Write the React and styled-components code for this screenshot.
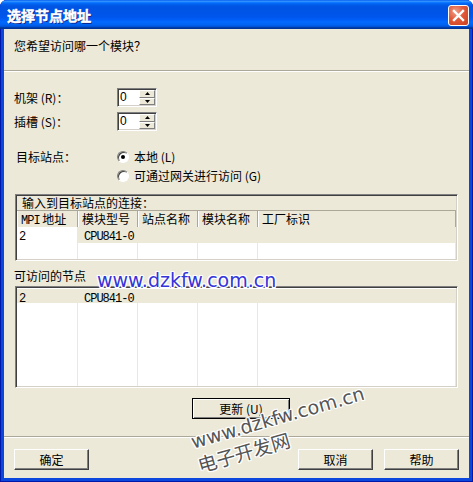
import React from "react";
import styled, { createGlobalStyle } from "styled-components";

const cols = ["", "", "", "", ""];

const App = () => {
  return (
    <>
      <GlobalStyle />
      <Window>
        <TitleBar>
          <Title>选择节点地址</Title>
          <CloseButton>
            <svg width="13" height="13" viewBox="0 0 13 13">
              <path d="M2 2 L11 11 M11 2 L2 11" stroke="#fff" strokeWidth="2.4" strokeLinecap="square" />
            </svg>
          </CloseButton>
        </TitleBar>

        <Body>
          <Question>您希望访问哪一个模块？</Question>
          <Separator />

          <FieldRow $mt={16} $h={19}>
            <Label>机架 (R)：</Label>
            <SpinBox value="0" />
          </FieldRow>
          <FieldRow $mt={5} $h={19}>
            <Label>插槽 (S)：</Label>
            <SpinBox value="0" />
          </FieldRow>

          <FieldRow $mt={18} $h={16}>
            <Label $indent={2}>目标站点：</Label>
            <RadioOption>
              <Radio $checked />
              本地 (L)
            </RadioOption>
          </FieldRow>
          <FieldRow $mt={3} $h={16}>
            <Label />
            <RadioOption>
              <Radio />
              可通过网关进行访问 (G)
            </RadioOption>
          </FieldRow>

          <ListFrame $mt={10} $h={67}>
            <Caption>输入到目标站点的连接：</Caption>
            <HeaderRow>
              <HeaderCell>
                <Mono>MPI</Mono>&nbsp;地址
              </HeaderCell>
              <HeaderCell>模块型号</HeaderCell>
              <HeaderCell>站点名称</HeaderCell>
              <HeaderCell>模块名称</HeaderCell>
              <HeaderCell>工厂标识</HeaderCell>
            </HeaderRow>
            <Row>
              <Cell $first>
                <Mono>2</Mono>
              </Cell>
              <Cell $grey>
                <Mono>CPU841-0</Mono>
              </Cell>
              <Cell $grey />
              <Cell $grey />
              <Cell $grey />
            </Row>
            <Row>
              {cols.map((c, i) => (
                <Cell key={i} $first={i === 0} />
              ))}
            </Row>
          </ListFrame>

          <SectionLabel>可访问的节点</SectionLabel>
          <ListFrame $mt={2} $h={102}>
            <NodeGrid>
              <Cell $first $grey>
                <Mono>2</Mono>
              </Cell>
              <Cell $grey>
                <Mono>CPU841-0</Mono>
              </Cell>
              <Cell $grey />
              <Cell $grey />
              <Cell $grey />
              {cols.map((c, i) => (
                <Cell key={i} $first={i === 0} $tall />
              ))}
            </NodeGrid>
          </ListFrame>

          <UpdateButton>更新 (U)</UpdateButton>
          <Separator $mt={17} />

          <ButtonBar>
            <Button>确定</Button>
            <RightButtons>
              <Button>取消</Button>
              <Button>帮助</Button>
            </RightButtons>
          </ButtonBar>
        </Body>

        <WatermarkBlue>www.dzkfw.com.cn</WatermarkBlue>
        <WatermarkGrey>
          <div>www.dzkfw.com.cn</div>
          <div>电子开发网</div>
        </WatermarkGrey>
      </Window>
    </>
  );
};

const SpinBox = ({ value }) => (
  <Spin>
    <SpinValue>{value}</SpinValue>
    <SpinButtons>
      <SpinArrow>
        <svg width="5" height="3" viewBox="0 0 5 3">
          <path d="M2.5 0 L5 3 L0 3 Z" fill="#000" />
        </svg>
      </SpinArrow>
      <SpinArrow>
        <svg width="5" height="3" viewBox="0 0 5 3">
          <path d="M0 0 L5 0 L2.5 3 Z" fill="#000" />
        </svg>
      </SpinArrow>
    </SpinButtons>
  </Spin>
);

export default App;

const GlobalStyle = createGlobalStyle`
  html, body {
    margin: 0;
    padding: 0;
    background: #ffffff;
  }
  body {
    font-family: "Noto Sans CJK SC", "Liberation Sans", sans-serif;
    font-size: 12px;
    color: #000;
  }
`;

const Window = styled.div`
  position: relative;
  width: 473px;
  height: 482px;
  display: flex;
  flex-direction: column;
  background: #0b47dc;
  border-radius: 7px 7px 0 0;
  overflow: hidden;
  box-shadow: inset 1px 0 0 #0019a8, inset -1px 0 0 #0019a8, inset 0 -1px 0 #0019a8;
`;

const TitleBar = styled.div`
  height: 29px;
  flex-shrink: 0;
  display: flex;
  align-items: center;
  justify-content: space-between;
  padding: 0 4px 0 7px;
  background: linear-gradient(
    #0058ee 0%,
    #3593ff 4%,
    #288eff 6%,
    #127dff 8%,
    #036ffc 10%,
    #0262ee 14%,
    #0057e5 20%,
    #0054e3 24%,
    #0055eb 56%,
    #005bf5 66%,
    #026afe 76%,
    #0062ef 86%,
    #0052d6 92%,
    #0040ab 94%,
    #003092 100%
  );
`;

const Title = styled.div`
  color: #fff;
  font-size: 14px;
  font-weight: 700;
  line-height: 18px;
  -webkit-text-stroke: 0.5px #fff;
  text-shadow: 1px 1px 0 #0a1883;
`;

const CloseButton = styled.div`
  width: 21px;
  height: 21px;
  box-sizing: border-box;
  margin-top: 1px;
  border: 1px solid #fff;
  border-radius: 3px;
  display: flex;
  align-items: center;
  justify-content: center;
  background: radial-gradient(circle at 35% 30%, #f0a08a 0%, #e0593a 45%, #c9401d 100%);
`;

const Body = styled.div`
  flex: 1;
  margin: 0 4px 4px;
  background: #ece9d8;
  display: flex;
  flex-direction: column;
`;

const Question = styled.div`
  height: 41px;
  box-sizing: border-box;
  padding: 9px 0 0 10px;
  line-height: 16px;
`;

const Separator = styled.div`
  height: 0;
  margin-top: ${(p) => p.$mt || 0}px;
  border-top: 1px solid #aca899;
  border-bottom: 1px solid #ffffff;
`;

const FieldRow = styled.div`
  display: flex;
  align-items: center;
  height: ${(p) => p.$h}px;
  margin-top: ${(p) => p.$mt}px;
  padding-left: 10px;
`;

const Label = styled.div`
  width: 103px;
  box-sizing: border-box;
  padding-left: ${(p) => p.$indent || 0}px;
  line-height: 16px;
`;

const Spin = styled.div`
  width: 40px;
  height: 19px;
  box-sizing: border-box;
  border: 1px solid;
  border-color: #808080 #ffffff #ffffff #808080;
  box-shadow: inset 1px 1px 0 #404040, inset -1px -1px 0 #d4d0c8;
  padding: 1px;
  background: #fff;
  display: flex;
`;

const SpinValue = styled.div`
  flex: 1;
  padding-left: 1px;
  font-family: "Liberation Sans", sans-serif;
  font-size: 12px;
  line-height: 15px;
`;

const SpinButtons = styled.div`
  width: 16px;
  display: flex;
  flex-direction: column;
`;

const SpinArrow = styled.div`
  flex: 1;
  box-sizing: border-box;
  background: #ece9d8;
  border: 1px solid;
  border-color: #ffffff #808080 #808080 #ffffff;
  display: flex;
  align-items: center;
  justify-content: center;
`;

const RadioOption = styled.div`
  display: flex;
  align-items: center;
  gap: 5px;
  line-height: 16px;
`;

const Radio = styled.span`
  width: 12px;
  height: 12px;
  box-sizing: border-box;
  border-radius: 50%;
  border: 1px solid;
  border-color: #808080 #ffffff #ffffff #808080;
  box-shadow: inset 1px 1px 0 #404040;
  background: #fff;
  display: inline-flex;
  align-items: center;
  justify-content: center;

  &::after {
    content: "";
    width: 4px;
    height: 4px;
    border-radius: 50%;
    background: ${(p) => (p.$checked ? "#000" : "transparent")};
  }
`;

const ListFrame = styled.div`
  margin: ${(p) => p.$mt}px 0 0 11px;
  width: 443px;
  height: ${(p) => p.$h}px;
  box-sizing: border-box;
  border: 1px solid;
  border-color: #808080 #ffffff #ffffff #808080;
  box-shadow: inset 1px 1px 0 #404040, inset -1px -1px 0 #d4d0c8;
  padding: 1px;
  background: #fff;
  display: flex;
  flex-direction: column;
  overflow: hidden;
`;

const Caption = styled.div`
  height: 14px;
  flex-shrink: 0;
  padding-left: 5px;
  background: #ece9d8;
  border-bottom: 1px solid #aca899;
  line-height: 14px;
`;

const gridCols = "61px 60px 60px 60px 1fr";

const HeaderRow = styled.div`
  display: grid;
  grid-template-columns: ${gridCols};
  height: 16px;
  flex-shrink: 0;
  border-bottom: 1px solid #aca899;
  box-sizing: border-box;
`;

const HeaderCell = styled.div`
  background: #ece9d8;
  border-right: 1px solid #aca899;
  box-shadow: inset 1px 0 0 #ffffff;
  padding-left: 4px;
  line-height: 15px;
  white-space: nowrap;
`;

const Row = styled.div`
  display: grid;
  grid-template-columns: ${gridCols};
  height: 16px;
  flex-shrink: 0;
`;

const NodeGrid = styled.div`
  flex: 1;
  margin-top: 1px;
  display: grid;
  grid-template-columns: ${gridCols};
  grid-template-rows: 14px 1fr;
`;

const Cell = styled.div`
  background: ${(p) => (p.$grey ? "#ece9d8" : "#ffffff")};
  border-right: 1px solid #ece9d8;
  padding-left: ${(p) => (p.$first ? 2 : 6)}px;
  line-height: ${(p) => (p.$tall ? "14px" : "16px")};
  white-space: nowrap;
`;

const Mono = styled.span`
  font-family: "Liberation Mono", monospace;
  font-size: 12px;
  letter-spacing: -1px;
`;

const SectionLabel = styled.div`
  margin-top: 7px;
  padding-left: 10px;
  height: 16px;
  line-height: 16px;
`;

const BaseButton = styled.button`
  height: 21px;
  box-sizing: border-box;
  padding: 0;
  background: #ece9d8;
  font-family: "Noto Sans CJK SC", "Liberation Sans", sans-serif;
  font-size: 12px;
  color: #000;
  line-height: 17px;
`;

const UpdateButton = styled(BaseButton)`
  width: 98px;
  margin: 10px 0 0 188px;
  border: 1px solid #000;
  box-shadow: inset 1px 1px 0 #ffffff, inset -1px -1px 0 #808080;
`;

const Button = styled(BaseButton)`
  width: 75px;
  border: 1px solid;
  border-color: #ffffff #404040 #404040 #ffffff;
  box-shadow: inset -1px -1px 0 #808080;
`;

const ButtonBar = styled.div`
  margin-top: 11px;
  padding: 0 10px;
  display: flex;
  justify-content: space-between;
`;

const RightButtons = styled.div`
  display: flex;
  gap: 11px;
`;

const outline = `
  -1px -1px 0 #fff, 1px -1px 0 #fff, -1px 1px 0 #fff, 1px 1px 0 #fff,
  0 -1px 0 #fff, 0 1px 0 #fff, -1px 0 0 #fff, 1px 0 0 #fff, 0 0 3px #fff
`;

const WatermarkBlue = styled.div`
  position: absolute;
  left: 97px;
  top: 268px;
  font-family: "DejaVu Sans", sans-serif;
  font-size: 19px;
  line-height: 24px;
  color: #3535d8;
  text-shadow: ${outline};
  white-space: nowrap;
`;

const WatermarkGrey = styled.div`
  position: absolute;
  left: 188px;
  top: 406px;
  width: 176px;
  font-family: "DejaVu Sans", "Noto Sans CJK SC", sans-serif;
  font-size: 19px;
  line-height: 25px;
  color: #555555;
  text-shadow: ${outline};
  white-space: nowrap;
  transform-origin: 87px 12px;
  transform: rotate(-16deg);
`;
